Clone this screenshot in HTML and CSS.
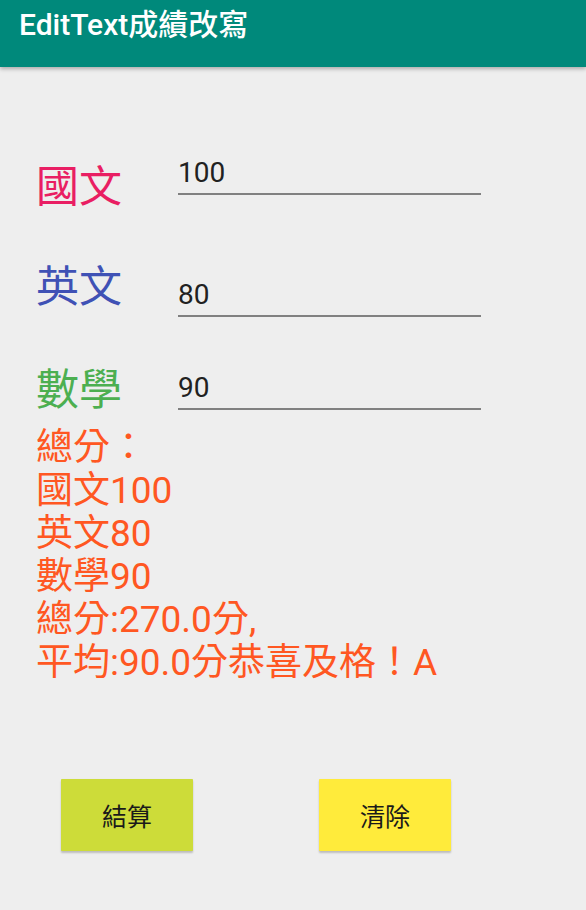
FILE: index.html
```html
<!DOCTYPE html>
<html lang="zh-Hant">
<head>
<meta charset="utf-8">
<title>EditText成績改寫</title>
<link rel="stylesheet" href="styles.css">
</head>
<body>
<header class="appbar"><h1 class="title">EditText成績改寫</h1></header>
<main class="content">
  <div class="row row-1">
    <div class="label label-chinese">國文</div>
    <div class="field">100</div>
  </div>
  <div class="row row-2">
    <div class="label label-english">英文</div>
    <div class="field">80</div>
  </div>
  <div class="row row-3">
    <div class="label label-math">數學</div>
    <div class="field">90</div>
  </div>
  <div class="result">總分：<br>國文100<br>英文80<br>數學90<br>總分:270.0分,<br>平均:90.0分恭喜及格！A</div>
  <div class="buttons">
    <button class="btn btn-calc">結算</button>
    <button class="btn btn-clear">清除</button>
  </div>
</main>
</body>
</html>
```
FILE: styles.css
```css
html, body {
  margin: 0;
  padding: 0;
}
body {
  background: #eeeeee;
  width: 586px;
  height: 910px;
  overflow: hidden;
  font-family: Roboto, "Noto Sans CJK TC", sans-serif;
}
.appbar {
  height: 67px;
  background: #00897b;
  box-shadow: 0 2px 4px rgba(0, 0, 0, 0.28);
  position: relative;
  z-index: 1;
}
.title {
  margin: 0;
  padding: 7px 0 0 19px;
  font-size: 30px;
  line-height: 36px;
  font-weight: 500;
  color: #ffffff;
}
.content {
  padding-left: 36px;
  display: flex;
  flex-direction: column;
}
.row {
  display: flex;
  align-items: flex-start;
}
.row-1 { margin-top: 92px; }
.row-2 { margin-top: 52px; }
.row-3 { margin-top: 45px; }
.label {
  width: 142px;
  font-family: "Noto Sans CJK TC", sans-serif;
  font-size: 43px;
  line-height: 48px;
}
.label-chinese { color: #e91e63; }
.label-english { color: #3f51b5; }
.label-math { color: #4caf50; }
.field {
  width: 303px;
  font-family: Roboto, "Noto Sans CJK TC", sans-serif;
  font-size: 28px;
  line-height: 28px;
  color: #212121;
  padding-bottom: 6px;
  border-bottom: 2px solid #808080;
}
.row-2 .field { margin-top: 22px; }
.row-3 .field { margin-top: 12px; }
.result {
  margin-top: 16px;
  font-size: 37px;
  line-height: 43px;
  color: #ff5722;
}
.buttons {
  display: flex;
  margin-top: 95px;
  padding-left: 25px;
  gap: 126px;
}
.btn {
  width: 132px;
  height: 72px;
  border: none;
  border-radius: 1px;
  font-family: "Noto Sans CJK TC", sans-serif;
  font-size: 25px;
  color: #1a1a1a;
  padding: 0;
  box-shadow: 0 2px 2px rgba(0, 0, 0, 0.2), 0 0 1px rgba(0, 0, 0, 0.1);
}
.btn-calc { background: #cddc39; }
.btn-clear { background: #ffeb3b; }
```
